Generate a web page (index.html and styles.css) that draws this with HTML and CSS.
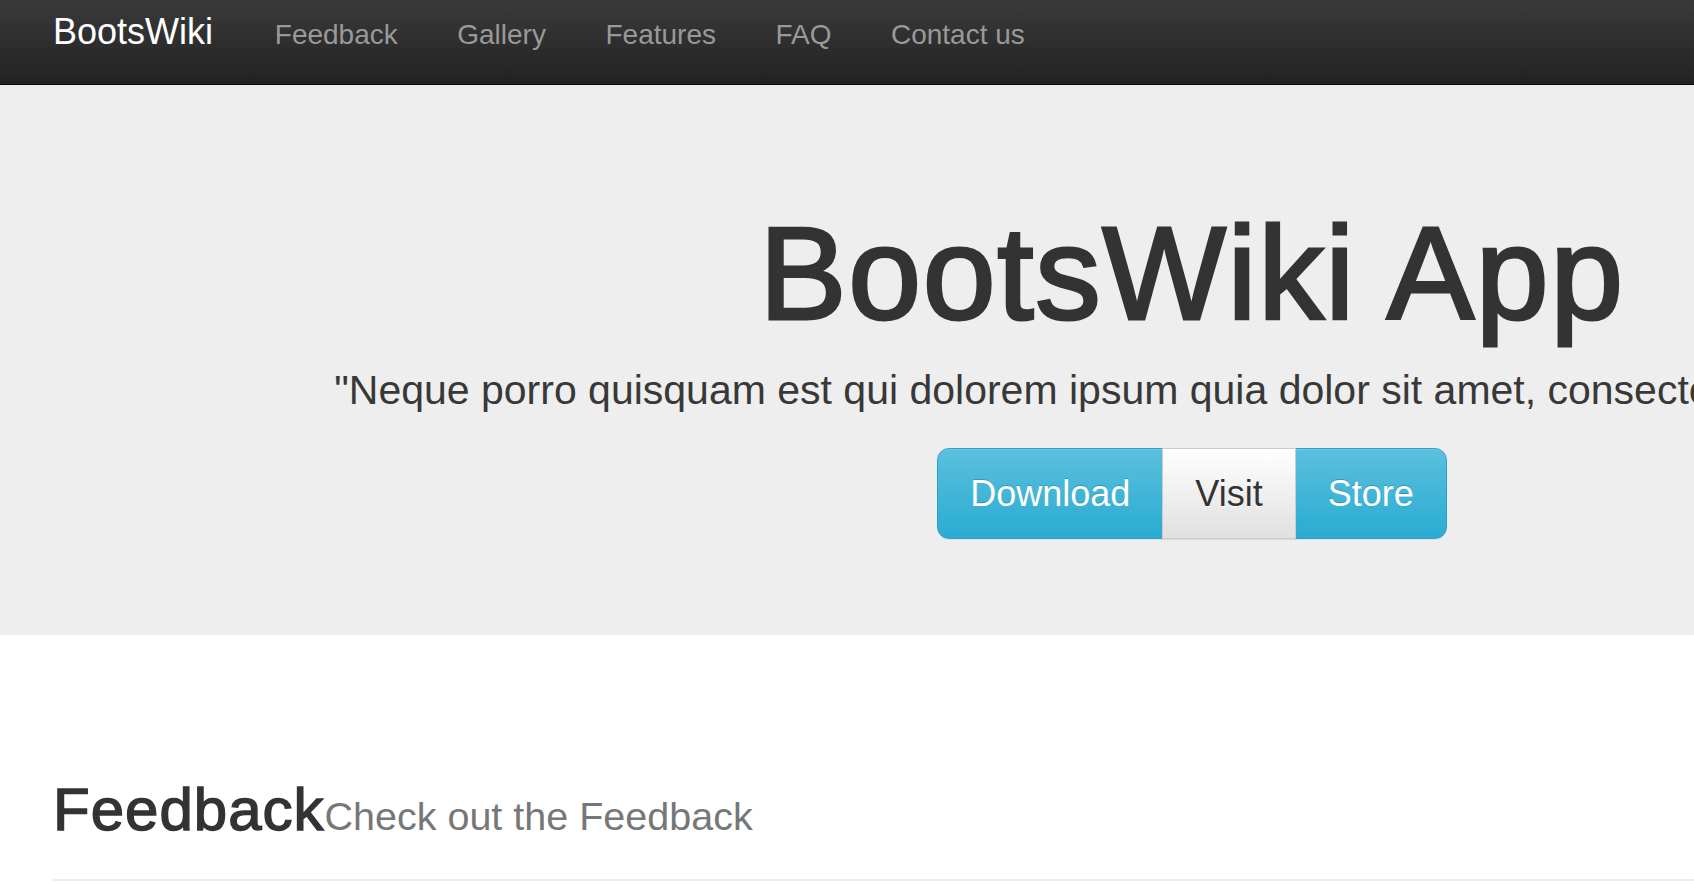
FILE: index.html
```html
<!DOCTYPE html>
<html lang="en">
<head>
<meta charset="utf-8">
<title>BootsWiki App</title>
<link rel="stylesheet" href="styles.css">
</head>
<body>
<header class="navbar">
  <div class="container nav-inner">
    <a class="brand" href="#">BootsWiki</a>
    <nav class="nav-links">
      <a href="#">Feedback</a>
      <a href="#">Gallery</a>
      <a href="#">Features</a>
      <a href="#">FAQ</a>
      <a href="#">Contact us</a>
    </nav>
  </div>
</header>
<section class="jumbotron">
  <div class="container jumbo-inner">
    <h1 class="title">BootsWiki App</h1>
    <p class="lead">"Neque porro quisquam est qui dolorem ipsum quia dolor sit amet, consectetur, adipisci velit..."</p>
    <div class="btn-group">
      <a class="btn btn-info first" href="#">Download</a>
      <a class="btn btn-default" href="#">Visit</a>
      <a class="btn btn-info last" href="#">Store</a>
    </div>
  </div>
</section>
<main class="container">
  <div class="page-header">
    <h2 class="section-title">Feedback<small class="subtitle">Check out the Feedback</small></h2>
  </div>
</main>
</body>
</html>
```
FILE: styles.css
```css
html {
  overflow: hidden;
}
body {
  margin: 0;
  font-family: "Liberation Sans", Arial, Helvetica, sans-serif;
  color: #333;
  background: #fff;
}
a {
  text-decoration: none;
}
.container {
  width: 2278px;
  margin-left: 53px;
}
.navbar {
  height: 84px;
  background: linear-gradient(to bottom, #3a3a3a 0%, #222 100%);
  border-bottom: 1px solid #080808;
}
.nav-inner {
  display: flex;
  align-items: baseline;
  padding-top: 12px;
}
.brand {
  font-size: 36px;
  line-height: 40px;
  color: #fff;
  margin-right: 32px;
}
.nav-links {
  display: flex;
  align-items: baseline;
}
.nav-links a {
  font-size: 28px;
  line-height: 40px;
  color: #999;
  padding: 0 29.75px;
}
.jumbotron {
  background: #eee;
  padding: 116px 0 96px;
}
.jumbo-inner {
  text-align: center;
}
.title {
  margin: 0;
  font-size: 131px;
  line-height: 145px;
  font-weight: normal;
  letter-spacing: 1.6px;
  -webkit-text-stroke: 3px #333;
  color: #333;
}
.lead {
  margin: 14px 0 28px;
  font-size: 41px;
  line-height: 60px;
  white-space: nowrap;
  color: #383838;
}
.btn-group {
  display: inline-flex;
  vertical-align: top;
}
.btn {
  display: inline-block;
  font-size: 36px;
  line-height: 49px;
  padding: 20px 32px;
  border: 1px solid transparent;
  box-shadow: inset 0 1px 0 rgba(255,255,255,.15), 0 1px 1px rgba(0,0,0,.075);
}
.btn + .btn {
  margin-left: -1px;
}
.btn-info {
  color: #fff;
  background: linear-gradient(to bottom, #5bc0de 0%, #2aabd2 100%);
  border-color: #28a4c9;
  text-shadow: 0 -1px 0 rgba(0,0,0,.2);
}
.btn-default {
  color: #333;
  background: linear-gradient(to bottom, #fff 0%, #e0e0e0 100%);
  border-color: #ccc;
  text-shadow: 0 1px 0 #fff;
  position: relative;
}
.first {
  border-radius: 12px 0 0 12px;
}
.last {
  border-radius: 0 12px 12px 0;
}
.page-header {
  margin-top: 142px;
  padding-bottom: 36px;
  border-bottom: 2px solid #eee;
}
.section-title {
  margin: 0;
  font-size: 60px;
  line-height: 66px;
  font-weight: normal;
  letter-spacing: 1px;
  -webkit-text-stroke: 1.4px #333;
  color: #333;
}
.subtitle {
  font-size: 39.5px;
  line-height: 1;
  color: #777;
  letter-spacing: 0;
  -webkit-text-stroke: 0;
}
```
